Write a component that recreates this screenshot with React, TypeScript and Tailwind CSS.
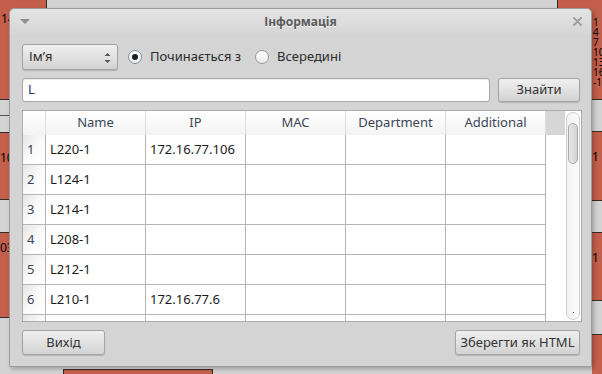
import React from "react";

const font = { fontFamily: '"Noto Sans", "Open Sans", sans-serif' };

function Btn({ children, className = "" }: { children: React.ReactNode; className?: string }) {
  return (
    <div
      className={
        "flex items-center justify-center rounded-[3px] border border-[#a3a3a3] bg-gradient-to-b from-[#f0f0f0] to-[#d3d3d3] text-[13px] text-[#333] shadow-[0_1px_1px_rgba(0,0,0,0.15)] " +
        className
      }
    >
      {children}
    </div>
  );
}

function Radio({ checked }: { checked?: boolean }) {
  return (
    <div
      className={
        "flex h-[14px] w-[14px] items-center justify-center rounded-full border bg-gradient-to-b from-[#ffffff] to-[#ececec] " +
        (checked ? "border-[#7f8fa3]" : "border-[#9a9a9a]")
      }
    >
      {checked && <div className="h-[6px] w-[6px] rounded-full bg-[#1e1e1e]" />}
    </div>
  );
}

const cols = ["Name", "IP", "MAC", "Department", "Additional"];
const rows: [string, string, string][] = [
  ["1", "L220-1", "172.16.77.106"],
  ["2", "L124-1", ""],
  ["3", "L214-1", ""],
  ["4", "L208-1", ""],
  ["5", "L212-1", ""],
  ["6", "L210-1", "172.16.77.6"],
  ["", "", ""],
];

export default function App() {
  return (
    <div className="relative h-[374px] w-[602px] overflow-hidden bg-[#d3d3d3]" style={font}>
      {/* background application (partially hidden) */}
      <div className="absolute left-0 top-0 h-[100px] w-[47px] border-r border-b border-[#3a2a26] bg-[#c45f4c] pl-[1px] pt-[12px] text-[12px] leading-[14px] text-black">
        14
      </div>
      <div className="absolute left-0 top-[115px] h-[1px] w-[10px] bg-[#555]" />
      <div className="absolute left-0 top-[132px] h-[68px] w-[10px] border-y border-[#3a2a26] bg-[#c45f4c] pt-[18px] text-[12px] leading-[14px] text-black">
        10
      </div>
      <div className="absolute left-0 top-[232px] h-[86px] w-[10px] border-y border-[#3a2a26] bg-[#c45f4c] pt-[8px] text-[12px] leading-[14px] text-black">
        03
      </div>
      <div className="absolute left-[557px] top-0 h-[100px] w-[45px] border-l border-b border-[#3a2a26] bg-[#c45f4c] pl-[35px] pt-[17px] text-[10px] leading-[10px] text-black">
        <div>1</div>
        <div>4</div>
        <div>7</div>
        <div>10</div>
        <div>13</div>
        <div>16</div>
        <div>-1</div>
      </div>
      <div className="absolute left-[592px] top-[131px] h-[70px] w-[10px] border-y border-[#3a2a26] bg-[#c45f4c] pt-[18px] text-[12px] leading-[14px] text-black">
        1
      </div>
      <div className="absolute left-[592px] top-[232px] h-[69px] w-[10px] border-y border-[#3a2a26] bg-[#c45f4c] pt-[18px] text-[12px] leading-[14px] text-black">
        1
      </div>
      <div className="absolute left-[592px] top-[334px] h-[40px] w-[10px] border-t border-[#3a2a26] bg-[#c45f4c]" />
      <div className="absolute left-[63px] top-[369px] h-[10px] w-[150px] border border-[#3a2a26] bg-[#c45f4c]" />

      {/* dialog window */}
      <div className="absolute left-[9px] top-[8px] flex h-[359px] w-[583px] flex-col rounded-t-[5px] border border-[#9c9c9c] bg-[#d4d4d4] shadow-[2px_2px_4px_rgba(0,0,0,0.25)]">
        {/* title bar */}
        <div className="relative flex h-[25px] items-center justify-center rounded-t-[5px] bg-gradient-to-b from-[#e4e4e4] to-[#d6d6d6]">
          <div className="absolute left-[10px] top-[10px] h-0 w-0 border-x-[5px] border-t-[5px] border-x-transparent border-t-[#8e8e8e]" />
          <span className="text-[12px] font-bold text-[#5a5a5a] [text-shadow:0_1px_0_#f4f4f4]">Інформація</span>
          <svg className="absolute right-[9px] top-[8px]" width="9" height="9" viewBox="0 0 9 9">
            <path d="M1 1 L8 8 M8 1 L1 8" stroke="#a0a0a0" strokeWidth="2" strokeLinecap="round" />
          </svg>
        </div>

        {/* body */}
        <div className="flex flex-1 flex-col pl-[12px] pr-[9px] pt-[10px]">
          {/* row 1 */}
          <div className="flex h-[26px] items-center">
            <Btn className="relative h-[26px] w-[96px] !justify-start pl-[6px] !text-[#2b2b2b]">
              <span>Ім’я</span>
              <svg className="absolute right-[6px] top-[7px]" width="7" height="12" viewBox="0 0 7 12">
                <path d="M0.5 4 L3.5 1 L6.5 4 Z" fill="#555" />
                <path d="M0.5 8 L3.5 11 L6.5 8 Z" fill="#555" />
              </svg>
            </Btn>
            <div className="ml-[10px]">
              <Radio checked />
            </div>
            <span className="ml-[8px] text-[13px] text-[#2a2a2a]">Починається з</span>
            <div className="ml-[14px]">
              <Radio />
            </div>
            <span className="ml-[8px] text-[13px] text-[#2a2a2a]">Всередині</span>
          </div>

          {/* row 2 */}
          <div className="mt-[8px] flex h-[24px] items-center">
            <div className="flex h-[24px] flex-1 items-center rounded-[3px] border border-[#a8a8a8] bg-white pl-[5px] text-[13px] text-[#1b2f66] shadow-[inset_0_1px_1px_rgba(0,0,0,0.08)]">
              L
            </div>
            <Btn className="ml-[8px] mr-[2px] h-[24px] w-[82px]">Знайти</Btn>
          </div>

          {/* table */}
          <div className="mt-[8px] flex h-[212px] overflow-hidden border border-[#ababab] bg-white">
            <div className="flex flex-1 flex-col overflow-hidden">
              {/* header */}
              <div className="flex h-[24px] shrink-0">
                <div className="h-full w-[23px] border-r border-[#dcdcdc] bg-gradient-to-b from-[#ffffff] to-[#f3f3f3]" />
                {cols.map((c) => (
                  <div
                    key={c}
                    className="flex h-full w-[100px] items-center justify-center border-r border-[#dcdcdc] bg-gradient-to-b from-[#ffffff] to-[#f3f3f3] text-[13px] text-[#3b4656]"
                  >
                    {c}
                  </div>
                ))}
                <div className="h-full flex-1 bg-[#d6d6d6]" />
              </div>
              {/* body */}
              {rows.map((r, i) => (
                <div key={i} className="flex h-[30px] shrink-0">
                  <div className="flex h-full w-[23px] items-center border-r border-b border-[#b4b4b4] bg-gradient-to-br from-[#e4e4e4] via-[#fafafa] to-[#ffffff] pl-[4px] text-[13px] text-[#3b4656]">
                    {r[0]}
                  </div>
                  {[r[1], r[2], "", "", ""].map((v, j) => (
                    <div
                      key={j}
                      className="flex h-full w-[100px] items-center border-r border-b border-[#b4b4b4] pl-[4px] text-[13px] text-[#1a1a1a]"
                    >
                      {v}
                    </div>
                  ))}
                  <div className="h-full flex-1" />
                </div>
              ))}
            </div>
            {/* scrollbar */}
            <div className="flex w-[16px] shrink-0 bg-white px-[1px] py-[1px]">
              <div className="relative flex flex-1 flex-col items-center rounded-full border border-[#cdcdcd] bg-gradient-to-r from-[#f2f2f2] to-[#fbfbfb]">
                <div className="mt-[10px] h-[41px] w-[10px] rounded-full border border-[#a9a9a9] bg-gradient-to-r from-[#e6e6e6] to-[#d2d2d2]" />
                <div className="absolute bottom-[6px] left-[6px] h-[1px] w-[1px] bg-[#555]" />
              </div>
            </div>
          </div>

          {/* bottom buttons */}
          <div className="mt-[8px] flex h-[25px] items-center justify-between">
            <Btn className="h-[25px] w-[83px]">Вихід</Btn>
            <Btn className="mr-[2px] h-[25px] w-[125px]">Зберегти як HTML</Btn>
          </div>
        </div>
      </div>
    </div>
  );
}
